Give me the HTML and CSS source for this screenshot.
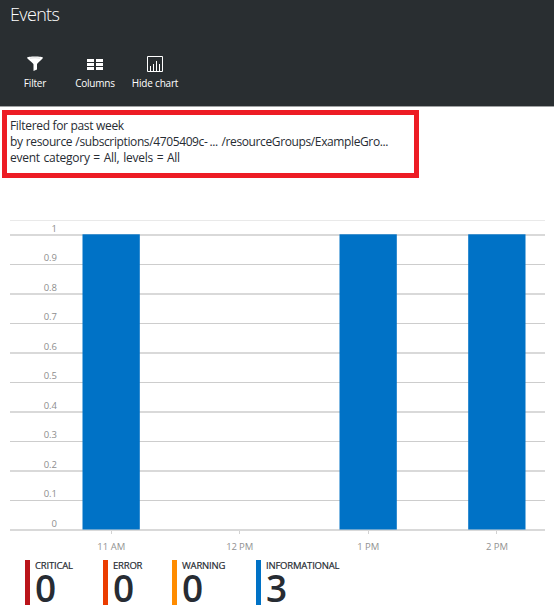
FILE: index.html
```
<!DOCTYPE html>
<html lang="en">
<head>
<meta charset="utf-8">
<title>Events</title>
<link rel="stylesheet" href="styles.css">
</head>
<body>
<header class="header">
  <h1 class="title">Events</h1>
  <nav class="toolbar">
    <button class="tool tool-filter">
      <svg class="icon" width="18" height="18" viewBox="0 0 18 18"><path d="M1 2.800C1 1 17 1 17 2.800C17 4 11 8 11 9.500V14.500L7.500 16V9.500C7.500 8 1 4 1 2.800Z" fill="#fff"/><path d="M4 3.200Q9 2.300 14 3.200" fill="none" stroke="#bfc1c2" stroke-width=".6"/></svg>
      <span class="tool-label">Filter</span>
    </button>
    <button class="tool tool-columns">
      <svg class="icon" width="18" height="18" viewBox="0 0 18 18"><path d="M1 4h7v3H1zM10 4h7v3h-7zM1 8h7v3H1zM10 8h7v3h-7zM1 12h7v3H1zM10 12h7v3h-7z" fill="#fff"/></svg>
      <span class="tool-label">Columns</span>
    </button>
    <button class="tool tool-chart">
      <svg class="icon" width="18" height="18" viewBox="0 0 18 18"><path d="M1.500 1.500h15v15h-15zM4.500 16v-5M7.500 16V9M10.500 16V6M13.500 16V9" fill="none" stroke="#fff"/></svg>
      <span class="tool-label">Hide chart</span>
    </button>
  </nav>
</header>
<main>
  <section class="filter-info">
    <p><span class="line-one">Filtered for past week</span></p>
    <p><span class="line-two">by resource /subscriptions/4705409c-<span class="cut">...</span> /resourceGroups/ExampleGro...</span></p>
    <p><span class="line-three">event category = All, levels = All</span></p>
  </section>
  <svg class="chart" width="554" height="340" viewBox="0 215 554 340">
    <path class="grid-top" d="M10 220.500H545"/>
    <path class="grid-soft" d="M10 235H545M10 294H545M10 353H545M10 412H545M10 471H545M10 530H545"/>
    <path class="grid" d="M10 264.500H545M10 323.500H545M10 382.500H545M10 441.500H545M10 500.500H545"/>
    <path class="tick" d="M111.500 531v3M239.500 531v3M368.500 531v3M496.500 531v3"/>
    <g class="bars">
      <rect x="82.500" y="234.300" width="57.300" height="295.200"/>
      <rect x="339.500" y="234.300" width="57.300" height="295.200"/>
      <rect x="468.200" y="234.300" width="57.300" height="295.200"/>
    </g>
    <g class="y-labels">
      <text x="57" y="232">1</text>
      <text x="57" y="261">0.9</text>
      <text x="57" y="291">0.8</text>
      <text x="57" y="320">0.7</text>
      <text x="57" y="350">0.6</text>
      <text x="57" y="379">0.5</text>
      <text x="57" y="409">0.4</text>
      <text x="57" y="438">0.3</text>
      <text x="57" y="468">0.2</text>
      <text x="57" y="497">0.1</text>
      <text x="57" y="527">0</text>
    </g>
    <g class="x-labels">
      <text x="111.300" y="550" textLength="28">11 AM</text>
      <text x="239.700" y="550" textLength="27">12 PM</text>
      <text x="368.300" y="550" textLength="22">1 PM</text>
      <text x="497" y="550" textLength="22">2 PM</text>
    </g>
  </svg>
  <section class="summary">
    <div class="stat critical"><span class="stat-label">CRITICAL</span><strong class="count">0</strong></div>
    <div class="stat error"><span class="stat-label">ERROR</span><strong class="count">0</strong></div>
    <div class="stat warning"><span class="stat-label">WARNING</span><strong class="count">0</strong></div>
    <div class="stat informational"><span class="stat-label">INFORMATIONAL</span><strong class="count">3</strong></div>
  </section>
</main>
</body>
</html>
```
FILE: styles.css
```
* { box-sizing: border-box; }
body {
  margin: 0;
  height: 615px;
  overflow: hidden;
  background: #fff;
  color: #272c33;
  font-family: "Open Sans", "Noto Sans", sans-serif;
}
.header {
  height: 107px;
  background: #292e31;
  border-bottom: 1px solid #a0a2a3;
  color: #fff;
}
.title {
  margin: 0;
  padding: 2px 10px 0;
  height: 55px;
  font-size: 18px;
  line-height: 24px;
  font-weight: 300;
  letter-spacing: -0.65px;
}
.toolbar { display: flex; padding-left: 5px; }
.tool {
  display: flex;
  flex-direction: column;
  align-items: center;
  width: 60px;
  padding: 0;
  border: 0;
  background: none;
  color: #fff;
  font: 10px/14px "Open Sans", sans-serif;
  white-space: nowrap;
}
.icon { display: block; margin-bottom: 3px; }
.tool-label { letter-spacing: -0.2px; }
.filter-info {
  width: 417px;
  height: 68px;
  margin: 3px 0 0 2px;
  padding: 3px 3px;
  border: 5px solid #ed1c24;
  font-size: 12px;
  line-height: 16px;
}
.filter-info p { margin: 0; white-space: nowrap; }
.line-one { letter-spacing: -0.32px; }
.line-two { letter-spacing: -0.38px; word-spacing: 0.5px; }
.line-three { letter-spacing: -0.25px; word-spacing: 0.85px; }
.cut { margin: 0 0.5px 0 2px; }
.chart { display: block; margin-top: 37px; }
.grid-top { stroke: #e9e9e9; }
.grid { stroke: #cdcdcd; }
.grid-soft { stroke: #d9d9d9; stroke-width: 2px; }
.tick { stroke: #d2d2d2; }
.bars { fill: #0072c6; }
.y-labels { font: 9.500px "Open Sans", sans-serif; fill: #8e8e8e; text-anchor: end; }
.x-labels { font: 9.500px "Open Sans", sans-serif; fill: #929292; text-anchor: middle; }
.summary { display: flex; padding: 5px 0 0 25px; }
.stat {
  height: 45px;
  padding-left: 5px;
  border-left: 5px solid #ba141a;
  white-space: nowrap;
}
.stat-label {
  display: block;
  font-size: 9.500px;
  line-height: 11px;
  letter-spacing: -0.2px;
  -webkit-text-stroke: 0.2px #272c33;
}
.count { display: block; font-size: 37px; line-height: 34px; font-weight: 600; }
.critical { width: 78px; }
.error { width: 69px; border-color: #eb3c00; }
.warning { width: 84px; border-color: #ff8c00; }
.informational { width: 100px; border-color: #0072c6; }
```
